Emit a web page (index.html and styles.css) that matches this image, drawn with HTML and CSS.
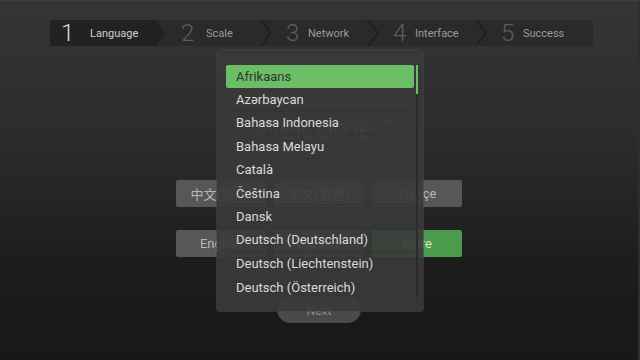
FILE: index.html
```html
<!DOCTYPE html>
<html>
<head>
<meta charset="utf-8">
<link rel="stylesheet" href="styles.css">
</head>
<body>
<div class="screen">
  <div class="stepper">
    <div class="step active"><span class="num">1</span><span class="lbl">Language</span></div>
    <div class="step s2"><span class="num">2</span><span class="lbl">Scale</span></div>
    <div class="step s3"><span class="num">3</span><span class="lbl">Network</span></div>
    <div class="step s4"><span class="num">4</span><span class="lbl">Interface</span></div>
    <div class="step s5"><span class="num">5</span><span class="lbl">Success</span></div>
  </div>

  <div class="content">
    <div class="welcome">Welcome<svg class="sparkle" width="18" height="18" viewBox="0 0 18 18"><path d="M7 3 L8 8 L13 9 L8 10 L7 15 L6 10 L1 9 L6 8 Z" fill="#6a6a6a"/><path d="M14 0 L14.6 2.4 L17 3 L14.6 3.6 L14 6 L13.4 3.6 L11 3 L13.4 2.4 Z" fill="#6a6a6a"/></svg></div>
    <div class="row">
      <div class="btn">中文(简体)</div>
      <div class="btn">中文(繁體)</div>
      <div class="btn">Türkçe</div>
    </div>
    <div class="row">
      <div class="btn">English</div>
      <div class="btn">Español</div>
      <div class="btn green">More</div>
    </div>
    <div class="next">Next</div>
  </div>

  <div class="popup">
    <div class="list">
      <div class="item sel">Afrikaans</div>
      <div class="item">Azərbaycan</div>
      <div class="item">Bahasa Indonesia</div>
      <div class="item">Bahasa Melayu</div>
      <div class="item">Català</div>
      <div class="item">Čeština</div>
      <div class="item">Dansk</div>
      <div class="item">Deutsch (Deutschland)</div>
      <div class="item">Deutsch (Liechtenstein)</div>
      <div class="item">Deutsch (Österreich)</div>
    </div>
    <div class="scroll"><div class="thumb"></div></div>
  </div>
</div>
</body>
</html>
```

FILE: styles.css
```css
html, body {
  margin: 0;
  padding: 0;
}
body {
  width: 640px;
  height: 360px;
  overflow: hidden;
  font-family: Roboto, "Noto Sans CJK SC", sans-serif;
}
.screen {
  position: relative;
  width: 640px;
  height: 360px;
  box-sizing: border-box;
  padding-top: 20px;
  background: linear-gradient(to bottom, #353535 0%, #2b2b2b 40%, #1c1c1c 75%, #181818 100%);
  border-top: 1px solid #3e3e3e;
  border-right: 2px solid #2e2e2e;
}
.stepper {
  display: flex;
  width: 543px;
  height: 26px;
  margin-left: 50px;
  margin-top: -1px;
  background: #2a2a2a;
  border-radius: 2px;
}
.step {
  position: relative;
  flex: none;
  box-sizing: border-box;
  width: 107px;
  display: flex;
  align-items: center;
  padding-left: 25px;
}
.step.s2 { padding-left: 27px; }
.step.s2 .lbl { margin-left: 3px; }
.step.s4 { width: 108px; }
.step.s5 { width: 117px; border-radius: 0 2px 2px 0; }
.step:not(:first-child)::before {
  content: "";
  position: absolute;
  left: -1px;
  top: 0;
  width: 12px;
  height: 26px;
  background: #202020;
  clip-path: polygon(0 0, 2.5px 0, 12px 50%, 2.5px 100%, 0 100%, 9.5px 50%);
}
.step.active {
  width: 104px;
  background: #222222;
  padding-left: 11px;
  border-radius: 2px 0 0 2px;
}
.step.active::after {
  content: "";
  position: absolute;
  right: -9px;
  top: 0;
  width: 9px;
  height: 26px;
  background: #222222;
  clip-path: polygon(0 0, 100% 50%, 0 100%);
  z-index: 1;
}
.num {
  font-size: 24px;
  font-weight: 300;
  color: #5e5e5e;
  width: 22px;
  line-height: 26px;
}
.active .num {
  color: #d9d9d9;
  width: 29px;
}
.lbl {
  font-size: 11px;
  color: #9a9a9a;
}
.active .lbl {
  color: #cfcfcf;
}
.content {
  display: flex;
  flex-direction: column;
  align-items: center;
}
.welcome {
  margin-top: 66px;
  height: 40px;
  font-size: 29px;
  font-weight: 300;
  color: #6e6e6e;
  display: flex;
  align-items: flex-start;
  padding-left: 14px;
}
.sparkle {
  margin-left: 6px;
  margin-top: 1px;
}
.row {
  display: flex;
  gap: 8px;
  margin-top: 28px;
}
.row + .row {
  margin-top: 23px;
}
.btn {
  width: 90px;
  height: 27px;
  box-sizing: border-box;
  border-radius: 2px;
  background: #575757;
  color: #b8b8b8;
  font-size: 13px;
  display: flex;
  align-items: center;
  justify-content: center;
}
.btn.green {
  background: #4c9a4c;
  color: #d0e8d0;
}
.next {
  margin-top: 39px;
  width: 84px;
  height: 27px;
  border-radius: 14px;
  background: #4a4a4a;
  color: #8e8e8e;
  font-size: 12px;
  display: flex;
  align-items: flex-end;
  justify-content: center;
  box-sizing: border-box;
  padding-bottom: 5px;
}
.popup {
  position: absolute;
  left: 217px;
  top: 49px;
  width: 206px;
  height: 261px;
  box-sizing: border-box;
  padding: 15px 0 0 9px;
  background: rgba(58, 58, 58, 0.92);
  border-radius: 3px;
  box-shadow: 0 0 0 1px rgba(70, 70, 70, 0.6);
  display: flex;
}
.list {
  width: 188px;
  display: flex;
  flex-direction: column;
}
.item {
  height: 23.4px;
  box-sizing: border-box;
  padding-left: 10px;
  display: flex;
  align-items: center;
  font-size: 13px;
  color: #dadada;
  border-bottom: 1px solid rgba(48, 48, 48, 0.7);
}
.item.sel {
  height: 23px;
  margin-bottom: 0.4px;
  background: #6bbd66;
  color: #2c3a2c;
  border-radius: 2px;
  border-bottom: none;
}
.item:last-child {
  border-bottom: none;
}
.scroll {
  margin-left: 2px;
  width: 2px;
  height: 232px;
  background: #2b2b2b;
}
.thumb {
  height: 29px;
  background: #6bbd66;
}
```
